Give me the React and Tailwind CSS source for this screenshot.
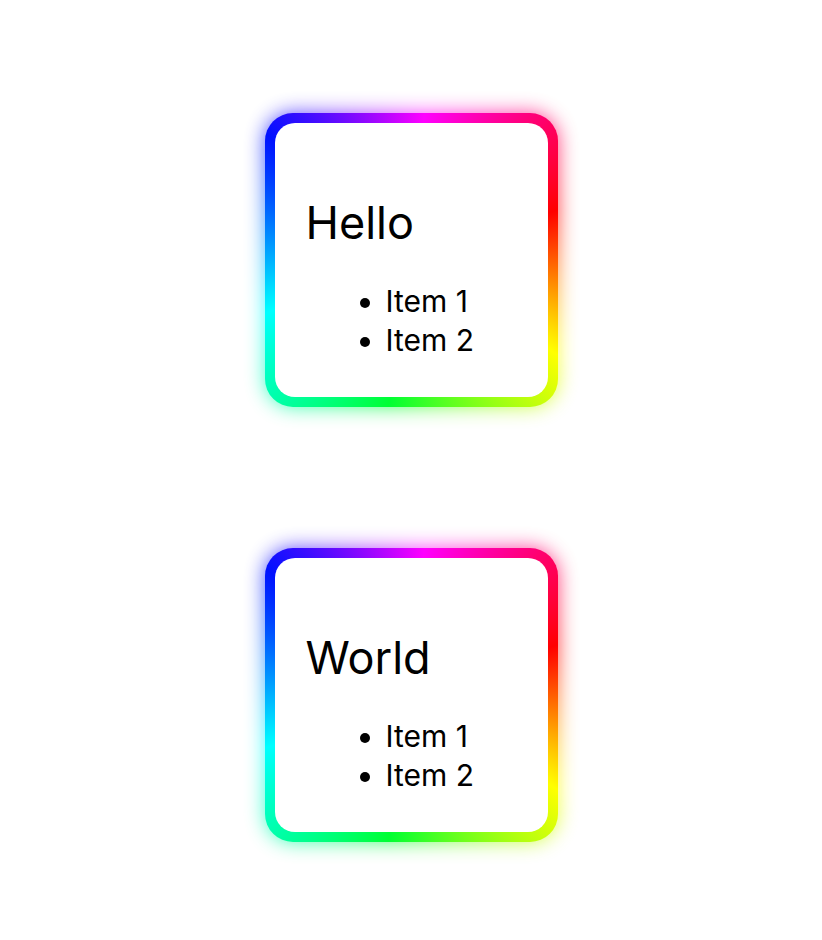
import React from "react";

function Card({ title }) {
  return (
    <div className="relative w-[293px] h-[294px]">
      <div className="absolute inset-0 rounded-[28px] bg-[conic-gradient(from_5deg,#ff00ff_0deg,#ff0000_66deg,#ffff00_118deg,#00ff33_184deg,#00ffff_245deg,#0011ff_306deg,#ff00ff_360deg)] blur-[10px] opacity-75" />
      <div className="relative h-full rounded-[28px] bg-[conic-gradient(from_5deg,#ff00ff_0deg,#ff0000_66deg,#ffff00_118deg,#00ff33_184deg,#00ffff_245deg,#0011ff_306deg,#ff00ff_360deg)] p-[10px]">
        <div className="h-full rounded-[20px] bg-white pl-[31px] pt-[73px] text-black">
          <h2 className="text-[45px] leading-[53px] font-normal">{title}</h2>
          <ul className="mt-[33px] list-disc pl-[80px] text-[30px] leading-[39px]">
            <li>Item 1</li>
            <li>Item 2</li>
          </ul>
        </div>
      </div>
    </div>
  );
}

export default function App() {
  return (
    <div className="min-h-[940px] bg-white flex flex-col items-center pt-[113px] gap-[141px] font-['Inter',sans-serif]">
      <Card title="Hello" />
      <Card title="World" />
    </div>
  );
}
